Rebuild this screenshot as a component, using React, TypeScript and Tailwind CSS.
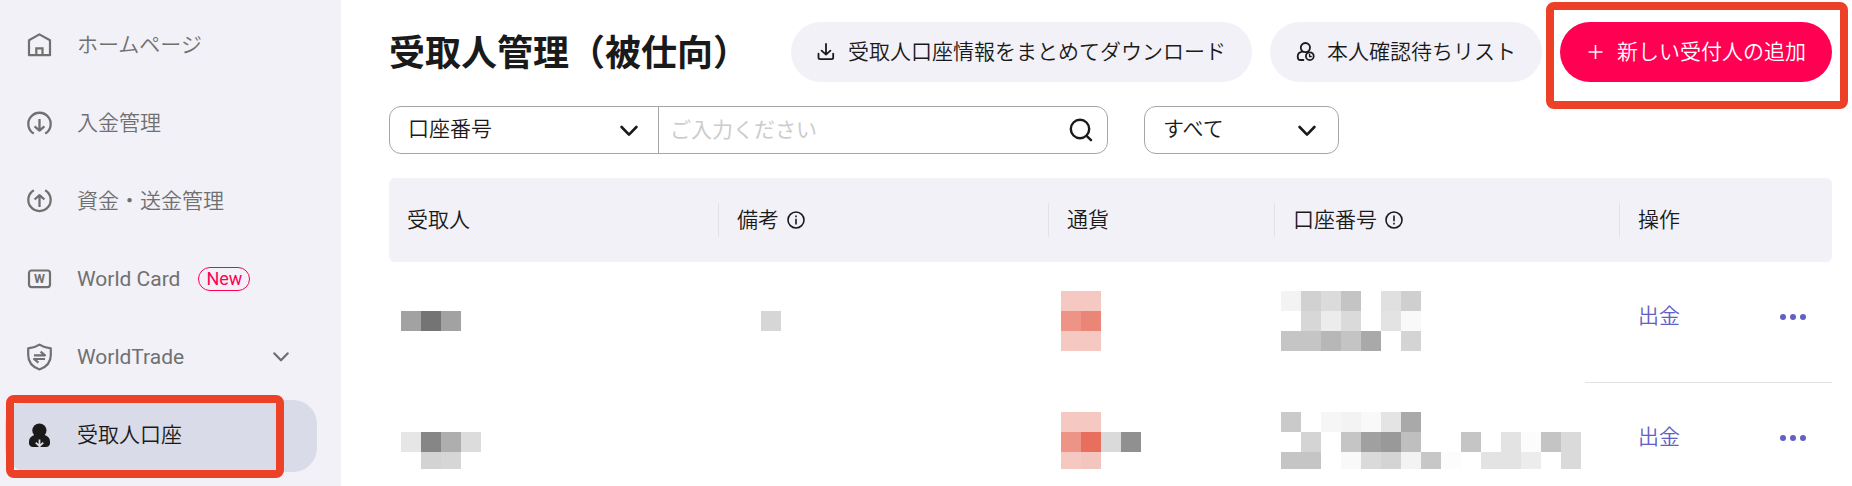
import React, { useState } from 'react';

// --- Icons ---

const HomeIcon = () => (
  <svg className="w-7 h-7 shrink-0" viewBox="0 0 28 28" fill="none" stroke="currentColor" strokeWidth="2.2" strokeLinejoin="round">
    <path d="M14.4 3.4 25 9.2V24.2H4V9.2Z" />
    <path d="M11.3 24V17.4H17.5V24" strokeLinejoin="miter" />
  </svg>
);

const DepositIcon = () => (
  <svg className="w-7 h-7 shrink-0" viewBox="0 0 28 28" fill="none" stroke="currentColor" strokeWidth="2.3" strokeLinejoin="round">
    <path d="M8.8 24.6A11.2 11.2 0 1 1 20.2 24.6" />
    <path d="M14.5 10V21.4M9.6 17.3 14.5 21.6 19.4 17.3" />
  </svg>
);

const TransferIcon = () => (
  <svg className="w-7 h-7 shrink-0" viewBox="0 0 28 28" fill="none" stroke="currentColor" strokeWidth="2.3" strokeLinejoin="round">
    <path d="M8.8 3.2A11.2 11.2 0 1 0 20.2 3.2" />
    <path d="M14.5 20V8.4M9.6 12.5 14.5 8.2 19.4 12.5" />
  </svg>
);

const CardIcon = () => (
  <svg className="w-7 h-7 shrink-0" viewBox="0 0 28 28" fill="none" stroke="currentColor" strokeWidth="2.2">
    <rect x="4" y="5.5" width="21" height="16.6" rx="2.5" />
    <text x="14.5" y="18.3" textAnchor="middle" fontSize="12.5" fontWeight="700" fontFamily="Roboto" fill="currentColor" stroke="none">W</text>
  </svg>
);

const TradeIcon = () => (
  <svg className="w-7 h-7 shrink-0" viewBox="0 0 28 28" fill="none" stroke="currentColor" strokeWidth="2.2" strokeLinejoin="round">
    <path d="M14.5 1.6C17.5 3.6 21.5 5 25.8 5.4V12C25.8 19 21.5 24 14.5 26.5C7.5 24 3.2 19 3.2 12V5.4C7.5 5 11.5 3.6 14.5 1.6Z" />
    <path d="M9 12.3H20L15.6 8.6M20 16H9L13.4 19.6" />
  </svg>
);

const PayeeIcon = () => (
  <svg className="w-7 h-7 shrink-0" viewBox="0 0 28 28" fill="currentColor">
    <circle cx="14.4" cy="9.6" r="7.1" />
    <path d="M9.5 14H19.5C23 15 25 17.5 25 20.5V22.2C25 24.6 23.2 26 21 26H8C5.8 26 4 24.6 4 22.2V20.5C4 17.5 6 15 9.5 14Z" />
    <path d="M14.5 18.4V25M10.8 21.6 14.5 25.2 18.2 21.6" fill="none" stroke="#dadbe8" strokeWidth="1.8" />
  </svg>
);

const Chevron = ({ className }: { className: string }) => (
  <svg className={className} viewBox="0 0 18 12" fill="none" stroke="currentColor" strokeWidth="2.6" strokeLinecap="round" strokeLinejoin="round">
    <path d="M1.6 2 9 9.6 16.4 2" />
  </svg>
);

const DownloadIcon = () => (
  <svg className="w-[18px] h-[18px] shrink-0" viewBox="0 0 18 18" fill="none" stroke="currentColor" strokeWidth="1.8" strokeLinecap="round" strokeLinejoin="round">
    <path d="M9 .9V11.4M4.6 7.6 9 11.6 13.4 7.6" />
    <path d="M1.5 10.6V14.6Q1.5 16.2 3.1 16.2H14.6Q16.2 16.2 16.2 14.6V10.6" />
  </svg>
);

const PendingIcon = () => (
  <svg className="w-[18px] h-[18px] shrink-0 overflow-visible" viewBox="0 0 18 18" fill="none" stroke="currentColor" strokeWidth="1.8" strokeLinecap="round">
    <circle cx="9.4" cy="4.6" r="4.6" />
    <path d="M6.4 8.6C3.4 9 1.7 10.8 1.7 13.4C1.7 15.6 2.8 17 4.6 17H7.4" />
    <circle cx="13.8" cy="13.2" r="3.9" />
    <path d="M13.6 11.4V13.5H15.2" strokeWidth="1.4" />
  </svg>
);

const PlusIcon = () => (
  <svg className="w-[18px] h-[18px] shrink-0" viewBox="0 0 18 18" fill="none" stroke="currentColor" strokeWidth="1.6">
    <path d="M9.5 2V16M2.5 9H16.5" />
  </svg>
);

const SearchIcon = () => (
  <svg className="w-6 h-6" viewBox="0 0 24 24" fill="none" stroke="currentColor" strokeWidth="2.4" strokeLinecap="round">
    <circle cx="11" cy="11" r="9.2" />
    <path d="M17.6 17.8 22 22.2" />
  </svg>
);

const InfoIcon = () => (
  <svg className="w-[18px] h-[18px]" viewBox="0 0 18 18" fill="none" stroke="currentColor" strokeWidth="1.6">
    <circle cx="9" cy="9" r="8" />
    <path d="M9 7.8V13.4M9 4.6V6.3" />
  </svg>
);

const AlertIcon = () => (
  <svg className="w-[18px] h-[18px]" viewBox="0 0 18 18" fill="none" stroke="currentColor" strokeWidth="1.6">
    <circle cx="9" cy="9" r="8" />
    <path d="M9 4.6V10.2M9 11.7V13.4" />
  </svg>
);

// --- Data ---

const navItems = [
  { id: 'home', label: 'ホームページ', icon: HomeIcon },
  { id: 'deposit', label: '入金管理', icon: DepositIcon },
  { id: 'transfer', label: '資金・送金管理', icon: TransferIcon },
  { id: 'card', label: 'World Card', icon: CardIcon, latin: true, isNew: true },
  { id: 'trade', label: 'WorldTrade', icon: TradeIcon, latin: true, expandable: true },
  { id: 'payee', label: '受取人口座', icon: PayeeIcon },
];

// Masked values: one colour per block, '' leaves the block empty
const rows = [
  {
    id: 1,
    name: [['', '', ''], ['#a2a2a2', '#747474', '#a2a2a2'], ['', '', '']],
    note: [[''], ['#d6d6d6'], ['']],
    currency: [['#f5c8c2', '#f5c8c2'], ['#ed9486', '#ea8677'], ['#f5c8c2', '#f5c8c2']],
    account: [
      ['#f3f3f3', '#d1d1d1', '#dbdbdb', '#c4c4c4', '', '#e0e0e0', '#cfcfcf'],
      ['', '#d7d7d7', '#ececec', '#dadada', '', '#e3e3e3', '#f9f9f9'],
      ['#c5c5c5', '#c5c5c5', '#b7b7b7', '#c4c4c4', '#a9a9a9', '', '#d4d4d4'],
    ],
  },
  {
    id: 2,
    name: [['', '', '', ''], ['#e6e6e6', '#868686', '#aeaeae', '#dcdcdc'], ['', '#d3d3d3', '#d6d6d6', '']],
    note: [],
    currency: [['#f5c8c2', '#f5c8c2', '', ''], ['#ed9486', '#e86e5d', '#dadada', '#909090'], ['#f5c8c2', '#f3c5bf', '', '']],
    account: [
      ['#cacaca', '', '#f6f6f6', '#f3f3f3', '#f9f9f9', '#e4e4e4', '#a9a9a9', '', '', '', '', '', '', '', ''],
      ['', '#d4d4d4', '', '#c5c5c5', '#a0a0a0', '#999999', '#bfbfbf', '', '', '#c5c5c5', '', '#e3e3e3', '#fcfcfc', '#c4c4c4', '#dadada'],
      ['#c5c5c5', '#c5c5c5', '', '#f9f9f9', '#dadada', '#d4d4d4', '#f3f3f3', '#c7c7c7', '#fcfcfc', '', '#e3e3e3', '#e3e3e3', '#ececec', '', '#dadada'],
    ],
  },
];

// --- Components ---

const Mask = ({ blocks, short }: { blocks: string[][]; short?: boolean }) => (
  <div>
    {blocks.map((line, y) => (
      <div key={y} className={short && y === 2 ? 'flex h-[17px]' : 'flex h-5'}>
        {line.map((color, x) => (
          <span key={x} className="w-5 h-full" style={{ backgroundColor: color || 'transparent' }} />
        ))}
      </div>
    ))}
  </div>
);

const Sidebar = ({ current, setCurrent }: { current: string; setCurrent: (id: string) => void }) => (
  <aside className="w-[341px] shrink-0 bg-[#f2f1f7] pt-[10px] pl-[5px] pr-6">
    <nav className="flex flex-col gap-1.5">
      {navItems.map((item) => (
        <div key={item.id} className="relative">
          <button
            onClick={() => setCurrent(item.id)}
            className={`w-full h-[72px] pl-5 pr-[28px] pb-[3px] flex items-center rounded-[24px] text-[21px] leading-7 text-left
              ${item.latin ? 'font-normal' : ''}
              ${current === item.id ? 'bg-[#dadbe8] text-[#1a1a1a]' : 'text-[#707070]'}`}
          >
            <item.icon />
            <span className="ml-6">{item.label}</span>
            {item.isNew && (
              <span className="ml-[18px] h-6 px-[7px] flex items-center rounded-full border border-[#ff0055] text-[18px] text-[#ff0055]">New</span>
            )}
            {item.expandable && <Chevron className="w-4 h-3 ml-auto" />}
          </button>
          {item.id === 'payee' && (
            <div className="absolute -top-[5px] left-px w-[278px] h-[83px] border-8 border-[#ec4127] rounded-lg pointer-events-none" />
          )}
        </div>
      ))}
    </nav>
  </aside>
);

const headCell = 'h-[34px] pl-[18px] flex items-center gap-2 border-r border-[#e2e1e7] whitespace-nowrap';

const App: React.FC = () => {
  const [current, setCurrent] = useState('payee');
  const [keyword, setKeyword] = useState('');

  return (
    <div className="flex h-screen overflow-hidden bg-white text-[21px] leading-7 text-[#1a1a1a] font-[350] font-[Roboto,'Noto_Sans_CJK_JP',sans-serif]">
      <Sidebar current={current} setCurrent={setCurrent} />

      <main className="flex-1 min-w-0 pt-[22px] pl-12 pr-5">
        {/* Title and actions */}
        <div className="flex items-center justify-between whitespace-nowrap">
          <h1 className="pt-1 text-[36px] leading-[48px] font-bold">受取人管理（被仕向）</h1>
          <div className="flex gap-[18px]">
            <button className="h-[60px] pl-[26px] pr-[26px] flex items-center gap-[13px] rounded-full bg-[#f2f1f7]">
              <DownloadIcon />
              受取人口座情報をまとめてダウンロード
            </button>
            <button className="h-[60px] pl-[26px] pr-[26px] flex items-center gap-[13px] rounded-full bg-[#f2f1f7]">
              <PendingIcon />
              本人確認待ちリスト
            </button>
            <div className="relative">
              <button className="h-[60px] pl-[26px] pr-[26px] flex items-center gap-[13px] rounded-full bg-[#ff0052] text-white">
                <PlusIcon />
                新しい受付人の追加
              </button>
              <div className="absolute -top-5 -bottom-[27px] -left-[14px] -right-4 border-8 border-[#ec4127] rounded-lg pointer-events-none" />
            </div>
          </div>
        </div>

        {/* Filters */}
        <div className="mt-6 flex gap-9">
          <div className="w-[719px] h-12 flex border border-[#a6a6a6] rounded-xl">
            <div className="relative w-[269px] border-r border-[#a6a6a6]">
              <select aria-label="検索項目" className="w-full h-full pl-[18px] pb-0.5 appearance-none outline-none">
                <option>口座番号</option>
              </select>
              <Chevron className="absolute right-5 top-[18px] w-[18px] h-3 pointer-events-none" />
            </div>
            <input
              aria-label="検索キーワード"
              value={keyword}
              onChange={(e) => setKeyword(e.target.value)}
              placeholder="ご入力ください"
              className="flex-1 min-w-0 pl-[11px] font-normal outline-none placeholder:text-[#cccccc]"
            />
            <button aria-label="検索" className="pr-[14px]">
              <SearchIcon />
            </button>
          </div>
          <div className="relative w-[195px] h-12 border border-[#a6a6a6] rounded-xl">
            <select aria-label="通貨" className="w-full h-full pl-[18px] pb-0.5 appearance-none outline-none">
              <option>すべて</option>
            </select>
            <Chevron className="absolute right-[22px] top-[18px] w-[18px] h-3 pointer-events-none" />
          </div>
        </div>

        {/* Payee list */}
        <table className="mt-6 w-full table-fixed text-left">
          <colgroup>
            <col />
            <col className="w-[330px]" />
            <col className="w-[226px]" />
            <col className="w-[345px]" />
            <col className="w-[212px]" />
          </colgroup>
          <thead className="bg-[#f2f1f7]">
            <tr className="h-[84px]">
              <th className="p-0 font-[350] rounded-l-md"><div className={headCell}>受取人</div></th>
              <th className="p-0 font-[350]"><div className={headCell}>備考 <InfoIcon /></div></th>
              <th className="p-0 font-[350]"><div className={headCell}>通貨</div></th>
              <th className="p-0 font-[350]"><div className={headCell}>口座番号 <AlertIcon /></div></th>
              <th className="p-0 font-[350] rounded-r-md"><div className="pl-[18px]">操作</div></th>
            </tr>
          </thead>
          <tbody>
            {rows.map((row) => (
              <tr key={row.id} className="h-[121px] align-top">
                <td className="pt-[29px] pl-3"><Mask blocks={row.name} short={row.id === 2} /></td>
                <td className="pt-[29px] pl-[42px]"><Mask blocks={row.note} /></td>
                <td className="pt-[29px] pl-3"><Mask blocks={row.currency} short={row.id === 2} /></td>
                <td className="p-0">
                  <div className="h-[121px] flex justify-between">
                    <div className="pt-[29px] pl-1.5"><Mask blocks={row.account} short={row.id === 2} /></div>
                    <div className="w-[35px] shrink-0 border-b border-[#e3e3e3]" />
                  </div>
                </td>
                <td className="p-0">
                  <div className="h-[121px] pt-10 pl-[18px] pr-[26px] flex items-start justify-between border-b border-[#e3e3e3] text-[#6260c3]">
                    <a href="#" className="leading-7">出金</a>
                    <button aria-label="その他" className="h-[30px] flex items-center gap-1">
                      <span className="w-1.5 h-1.5 rounded-full bg-current" />
                      <span className="w-1.5 h-1.5 rounded-full bg-current" />
                      <span className="w-1.5 h-1.5 rounded-full bg-current" />
                    </button>
                  </div>
                </td>
              </tr>
            ))}
          </tbody>
        </table>
      </main>
    </div>
  );
};

export default App;
